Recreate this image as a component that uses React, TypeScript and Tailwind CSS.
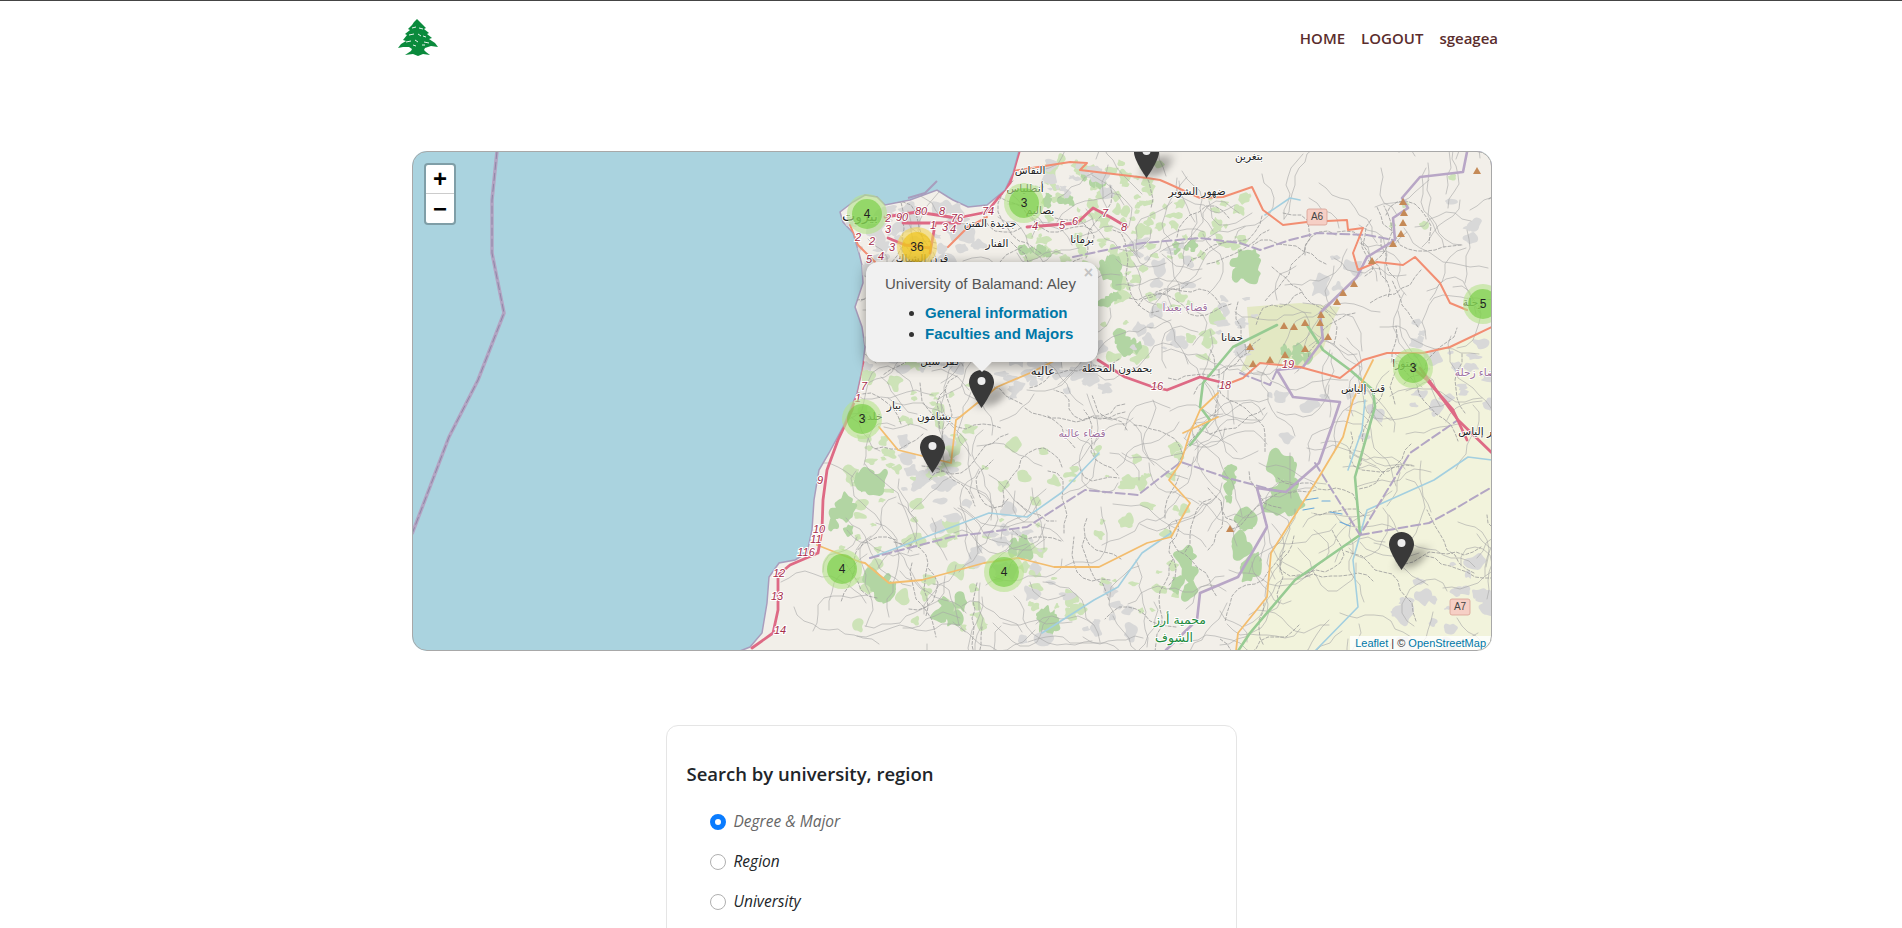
// Map page: the OSM tiles are redrawn as one svg using page coordinates (viewBox starts at the map's corner)
const MAP_X = 412;
const MAP_Y = 151;

const COAST =
  "1019,151 1013,173 1005,190 987,205 968,207 953,200 948,197 937,190 910,200 885,205 877,197 865,195 853,202 840,212 843,222 853,233 859,253 862,265 863,283 855,307 862,327 865,347 862,370 857,393 843,427 829,453 819,470 814,500 812,530 807,553 795,560 779,563 769,577 767,603 762,633 750,647 740,651 1492,651 1492,151";
const BEKAA = "1236,651 1267,597 1271,553 1319,477 1343,437 1373,360 1423,355 1492,330 1492,651";
const RESERVE = "1247,307 1300,303 1340,307 1333,320 1323,350 1303,367 1260,363 1240,373 1250,347";

const MOTORWAY = [
  "863,362 852,410 838,440 827,470 823,500 822,530 818,553 790,565 778,575 778,610 773,633 752,648",
  "885,217 917,212 957,218 987,212 1010,183 1019,152",
  "903,223 960,223",
  "935,225 930,253",
  "888,238 905,245 930,248",
  "1027,227 1053,225 1077,223 1093,208 1110,217 1127,227",
  "1098,360 1125,377 1153,387 1167,390 1200,377 1220,382",
  "1413,368 1427,380 1453,410 1467,440",
  "1420,368 1458,420 1492,453",
];
const TRUNK = [
  "1007,172 1070,162 1087,163 1080,170 1147,178 1160,180 1167,183 1200,198 1223,197 1252,187 1263,210 1283,225 1307,222 1347,220 1348,230 1363,228 1353,253 1358,270 1377,262 1403,265 1415,257 1440,283 1450,303 1467,310",
  "1225,385 1243,378 1260,363 1300,367 1340,378 1363,360 1387,353 1423,353 1450,347 1492,327",
  "948,247 967,228 987,217",
  "850,225 858,245 875,262",
];
const SECONDARY = [
  "1373,360 1353,400 1343,437 1319,477 1271,553 1267,597 1238,633 1236,651",
  "817,545 860,562 865,563 889,583 922,580 984,563 1018,558 1054,567 1099,567 1147,543 1171,537 1190,503 1169,480 1181,462 1190,433 1200,410 1218,393",
  "1183,433 1218,417",
  "879,427 898,450 951,463 956,420 960,417 997,387 1030,373 1060,358",
];
const ADMIN = [
  "1467,152 1463,172 1420,177 1402,198 1408,208 1393,218 1395,240 1367,257 1357,277 1320,313 1323,340 1303,367 1277,370 1293,397 1340,402 1333,423 1319,463 1286,492 1257,488 1267,527 1238,577 1200,593 1197,620 1166,650",
];
const ADMIN_DASHED = [
  "1073,257 1120,247 1143,243 1200,238 1240,243 1260,250 1290,240 1317,233 1367,235 1393,240",
  "870,558 951,537 1027,527 1085,490 1138,495 1161,477 1181,462 1228,478 1281,492",
  "1315,463 1360,535 1410,453 1458,420",
  "1360,535 1429,523 1458,507 1492,487",
  "1240,373 1270,385 1277,370",
];
const PROTECTED = [
  "1277,325 1233,347 1203,383 1200,407 1210,420 1190,445",
  "1307,325 1323,350 1350,370 1373,390 1375,407 1355,477 1360,535 1295,580 1250,633 1238,651",
];
const RIVERS = [
  "870,558 989,513 1027,517 1061,493 1099,453",
  "1042,633 1094,600 1118,587 1142,553 1171,533",
  "1315,651 1358,607 1353,560 1367,510 1434,480 1468,457 1492,460",
  "1348,470 1362,430 1365,400",
  "1265,215 1290,198 1300,200",
];
const WATER_DASHES = ["1305,500 1318,498", "1322,501 1330,501", "1303,510 1314,508", "1330,512 1342,514", "1340,522 1350,526"];

const PEAKS: [number, number][] = [
  [1477, 171], [1403, 202], [1404, 213], [1403, 223], [1401, 234], [1393, 244], [1372, 261], [1354, 284], [1343, 293],
  [1337, 302], [1321, 315], [1320, 323], [1305, 323], [1284, 326], [1294, 327], [1328, 337], [1250, 347], [1305, 349],
  [1285, 355], [1270, 360], [1253, 364], [1230, 529],
];

const PLACES: [string, number, number][] = [
  ["النقاش", 1030, 171], ["أنطلياس", 1025, 189], ["بصاليم", 1040, 211], ["جديدة المتن", 990, 224], ["الفنار", 997, 244],
  ["برمانا", 1082, 240], ["ضهور الشوير", 1197, 192], ["بتغرين", 1249, 157], ["حمانا", 1232, 338], ["بحمدون المحطة", 1117, 369],
  ["بشامون", 934, 417], ["يبار", 894, 406], ["فرن الشباك", 922, 259], ["كفر سيل", 940, 362], ["قب إلياس", 1363, 389],
  ["بر إلياس", 1477, 432], ["زحلة", 1473, 303], ["شتورا", 1405, 364], ["خلدة", 872, 417],
];
const DISTRICTS: [string, number, number][] = [
  ["قضاء بعبدا", 1185, 308], ["قضاء عاليه", 1082, 434], ["قضاء زحلة", 1478, 373],
];
const ROAD_NUMBERS: [string, number, number][] = [
  ["90", 902, 218], ["80", 921, 212], ["8", 942, 212], ["76", 957, 219], ["74", 988, 212], ["2", 888, 219], ["3", 888, 230],
  ["2", 858, 238], ["2", 872, 242], ["3", 892, 248], ["5", 869, 260], ["4", 881, 257], ["1", 933, 226], ["3", 945, 228],
  ["4", 953, 230], ["4", 1035, 227], ["5", 1062, 226], ["6", 1075, 222], ["7", 1105, 214], ["8", 1124, 228], ["16", 1157, 387],
  ["18", 1225, 386], ["19", 1288, 365], ["7", 864, 387], ["1", 858, 399], ["9", 820, 481], ["10", 819, 530], ["11", 816, 540],
  ["116", 806, 553], ["12", 779, 574], ["13", 777, 597], ["14", 780, 631],
];

function random(seed: number) {
  let s = seed;
  return () => {
    s = (s + 0x6d2b79f5) | 0;
    let t = Math.imul(s ^ (s >>> 15), 1 | s);
    t = (t + Math.imul(t ^ (t >>> 7), 61 | t)) ^ t;
    return ((t ^ (t >>> 14)) >>> 0) / 4294967296;
  };
}

// rounded, uneven patch: quadratic curves through the midpoints of a jittered ring
function blob(rnd: () => number, x: number, y: number, rx: number, ry: number) {
  const n = 11;
  const pts: [number, number][] = [];
  for (let i = 0; i < n; i++) {
    const a = (i / n) * Math.PI * 2;
    const k = 0.45 + rnd() * 0.95;
    pts.push([x + Math.cos(a) * rx * k, y + Math.sin(a) * ry * k]);
  }
  const mid = (a: [number, number], b: [number, number]) => `${((a[0] + b[0]) / 2).toFixed(1)} ${((a[1] + b[1]) / 2).toFixed(1)}`;
  let d = `M${mid(pts[n - 1], pts[0])}`;
  pts.forEach((p, i) => {
    d += `Q${p[0].toFixed(1)} ${p[1].toFixed(1)} ${mid(p, pts[(i + 1) % n])}`;
  });
  return d + "Z";
}

// zones: x, y, width, height, count, max radius
function scatter(seed: number, zones: number[][]) {
  const rnd = random(seed);
  let d = "";
  zones.forEach(([x, y, w, h, count, size]) => {
    for (let i = 0; i < count; i++) {
      const r = size * (0.3 + rnd() * 0.7);
      d += blob(rnd, x + rnd() * w, y + rnd() * h, r, r * (0.45 + rnd() * 0.7));
    }
  });
  return d;
}

// a large forest is several overlapping patches along its length
function forest(seed: number, areas: number[][]) {
  const rnd = random(seed);
  let d = "";
  areas.forEach(([x, y, rx, ry]) => {
    for (let i = 0; i < 8; i++) {
      const r = Math.min(rx, ry) * (0.45 + rnd() * 0.4);
      d += blob(rnd, x + (rnd() - 0.5) * rx * 1.5, y + (rnd() - 0.5) * ry * 1.5, r, r * 1.2);
    }
  });
  return d;
}

function tracks(seed: number, count: number) {
  const rnd = random(seed);
  const out: string[] = [];
  for (let i = 0; i < count; i++) {
    let x = 850 + rnd() * 640;
    let y = 155 + rnd() * 490;
    let a = rnd() * Math.PI * 2;
    let p = `${x.toFixed(0)},${y.toFixed(0)}`;
    const steps = 5 + Math.floor(rnd() * 8);
    for (let j = 0; j < steps; j++) {
      a += (rnd() - 0.5) * 1.4;
      x += Math.cos(a) * 9;
      y += Math.sin(a) * 9;
      p += ` ${x.toFixed(0)},${y.toFixed(0)}`;
    }
    out.push(p);
  }
  return out;
}

const GREEN_PALE = scatter(11, [
  [1030, 160, 130, 90, 60, 8],
  [1000, 240, 130, 60, 36, 10],
  [1120, 195, 130, 70, 44, 7],
  [1100, 260, 120, 100, 22, 9],
  [860, 360, 120, 110, 34, 9],
  [840, 460, 150, 170, 50, 10],
  [1000, 440, 130, 180, 40, 8],
  [1130, 440, 60, 180, 18, 9],
  [1330, 170, 130, 60, 4, 6],
]);
const GREEN = forest(2, [
  [1247, 263, 12, 16], [1183, 248, 24, 6], [1130, 343, 18, 10], [1248, 543, 12, 40], [1286, 483, 16, 34],
  [1183, 573, 12, 26], [1228, 487, 7, 26], [870, 483, 18, 12], [841, 517, 12, 18], [1018, 548, 12, 8],
  [879, 587, 20, 12], [1105, 300, 16, 6], [1295, 355, 18, 7], [1090, 180, 22, 6], [1060, 200, 18, 6],
  [1035, 250, 20, 6], [1110, 270, 10, 14], [950, 610, 16, 12], [1050, 620, 12, 12],
]);
const GREY = scatter(23, [
  [850, 205, 130, 70, 56, 12],
  [865, 340, 100, 30, 18, 10],
  [1000, 345, 110, 55, 34, 11],
  [900, 440, 50, 50, 16, 11],
  [1130, 240, 60, 110, 24, 9],
  [1050, 165, 60, 30, 18, 8],
  [1210, 295, 50, 60, 14, 8],
  [1300, 240, 60, 50, 4, 11],
  [1270, 390, 110, 50, 10, 10],
  [1410, 320, 82, 100, 24, 9],
  [1395, 555, 97, 95, 22, 11],
  [930, 500, 110, 70, 20, 10],
  [1020, 570, 120, 70, 14, 9],
  [1450, 180, 40, 60, 4, 9],
]);
const TRACKS = tracks(37, 300);
const PATHS = tracks(41, 110);

function Lines({ items, color, width, dash }: { items: string[]; color: string; width: number; dash?: string }) {
  return (
    <>
      {items.map((points, i) => (
        <polyline
          key={i}
          points={points}
          fill="none"
          stroke={color}
          strokeWidth={width}
          strokeDasharray={dash}
          strokeLinecap="round"
          strokeLinejoin="round"
        />
      ))}
    </>
  );
}

function MapTiles() {
  return (
    <svg viewBox={`${MAP_X} ${MAP_Y} 1080 500`} className="absolute inset-0 h-full w-full">
      <defs>
        <clipPath id="land">
          <polygon points={COAST} />
        </clipPath>
      </defs>
      <rect x={MAP_X} y={MAP_Y} width="1080" height="500" fill="#aad3df" />
      <polyline points="497,151 492,200 492,253 504,313 478,380 449,437 412,534" fill="none" stroke="#b3a4c3" strokeWidth="3.5" />
      <polyline points="497,151 492,200 492,253 504,313 478,380 449,437 412,534" fill="none" stroke="#8f88a8" strokeWidth="1" strokeDasharray="8 3" />
      <polygon points={COAST} fill="#f2efe9" stroke="#a99dbd" strokeWidth="1.5" />
      <polyline points="937,181 925,193 908,198" fill="none" stroke="#a99dbd" strokeWidth="2" />
      <g clipPath="url(#land)">
        <polygon points={BEKAA} fill="#f2f3dc" />
        <polygon points={RESERVE} fill="#e3e8c3" />
        <path d={GREEN_PALE} fill="#cde3b8" />
        <path d={GREEN} fill="#b2d5a3" />
        <path d={GREY} fill="#d8d8d8" />
        <Lines items={TRACKS} color="#a6a6a6" width={0.6} />
        <Lines items={PATHS} color="#9a9a9a" width={0.8} dash="3 2" />
        <Lines items={RIVERS} color="#a3cfe0" width={1.6} />
        <Lines items={WATER_DASHES} color="#6aa9dc" width={1.2} />
        <Lines items={PROTECTED} color="#97cb93" width={2.6} />
        <Lines items={ADMIN} color="#b8a6c6" width={2.6} />
        <Lines items={ADMIN_DASHED} color="#b3a6c4" width={2} dash="9 4" />
        <Lines items={SECONDARY} color="#f3bd6e" width={1.8} />
        <Lines items={TRUNK} color="#f28e72" width={2} />
        <Lines items={MOTORWAY} color="#de6a85" width={2.8} />
        {PEAKS.map(([x, y]) => (
          <polygon key={`${x}-${y}`} points={`${x},${y - 4} ${x + 4},${y + 3} ${x - 4},${y + 3}`} fill="#c58a57" />
        ))}
      </g>
      {ROAD_NUMBERS.map(([label, x, y]) => (
        <text key={`${label}-${x}`} x={x} y={y} textAnchor="middle" dominantBaseline="middle" stroke="#fff" strokeWidth="2" className="fill-[#a62d4c] font-['Liberation_Sans'] text-[11px] italic [paint-order:stroke]">
          {label}
        </text>
      ))}
      {PLACES.map(([label, x, y]) => (
        <text key={label} x={x} y={y} textAnchor="middle" dominantBaseline="middle" stroke="#fff" strokeWidth="1.5" className="fill-[#222] font-['DejaVu_Sans'] text-[10.5px] [paint-order:stroke]">
          {label}
        </text>
      ))}
      {DISTRICTS.map(([label, x, y]) => (
        <text key={label} x={x} y={y} textAnchor="middle" dominantBaseline="middle" stroke="#fff" strokeWidth="1.5" className="fill-[#9d6f9d] font-['DejaVu_Sans'] text-[10.5px] [paint-order:stroke]">
          {label}
        </text>
      ))}
      <text x="1043" y="371" textAnchor="middle" dominantBaseline="middle" stroke="#fff" strokeWidth="2" className="fill-[#222] font-['DejaVu_Sans'] text-[12px] [paint-order:stroke]">
        عاليه
      </text>
      <text x="860" y="217" textAnchor="middle" dominantBaseline="middle" stroke="#fff" strokeWidth="2" className="fill-[#222] font-['DejaVu_Sans'] text-[14px] [paint-order:stroke]">
        بيروت
      </text>
      <text x="1180" y="620" textAnchor="middle" dominantBaseline="middle" stroke="#fff" strokeWidth="2" className="fill-[#1c8a3c] font-['DejaVu_Sans'] text-[12.5px] [paint-order:stroke]">
        محمية أرز
      </text>
      <text x="1174" y="638" textAnchor="middle" dominantBaseline="middle" stroke="#fff" strokeWidth="2" className="fill-[#1c8a3c] font-['DejaVu_Sans'] text-[12.5px] [paint-order:stroke]">
        الشوف
      </text>
      {[
        ["A6", 1317, 217],
        ["A7", 1460, 607],
      ].map(([label, x, y]) => (
        <g key={label as string}>
          <rect x={(x as number) - 10} y={(y as number) - 8} width="20" height="16" rx="2" fill="#f6cfc5" stroke="#d99f92" strokeWidth="0.8" />
          <text x={x} y={(y as number) + 0.5} textAnchor="middle" dominantBaseline="middle" className="fill-[#444] font-['Liberation_Sans'] text-[10px]">
            {label}
          </text>
        </g>
      ))}
    </svg>
  );
}

const CLUSTERS = [
  { n: 4, x: 867, y: 214 },
  { n: 36, x: 917, y: 247 },
  { n: 3, x: 1024, y: 203 },
  { n: 3, x: 862, y: 419 },
  { n: 5, x: 1483, y: 304 },
  { n: 3, x: 1413, y: 368 },
  { n: 4, x: 842, y: 569 },
  { n: 4, x: 1004, y: 572 },
];

const PINS = [
  { x: 1146, y: 178 },
  { x: 981, y: 408 },
  { x: 932, y: 473 },
  { x: 1401, y: 570 },
];

function Cluster({ n, x, y }: { n: number; x: number; y: number }) {
  const big = n >= 10;
  return (
    <div
      className={`absolute flex h-10 w-10 items-center justify-center rounded-full ${big ? "bg-[rgba(241,211,87,0.6)]" : "bg-[rgba(181,226,140,0.6)]"}`}
      style={{ left: x - MAP_X - 20, top: y - MAP_Y - 20 }}
    >
      <div className={`flex h-[30px] w-[30px] items-center justify-center rounded-full font-['Liberation_Sans'] text-xs text-[#222] ${big ? "bg-[rgba(240,194,12,0.6)]" : "bg-[rgba(110,204,57,0.6)]"}`}>
        {n}
      </div>
    </div>
  );
}

function Pin({ x, y }: { x: number; y: number }) {
  return (
    <div className="absolute h-[38px] w-[25px]" style={{ left: x - MAP_X - 12.5, top: y - MAP_Y - 38 }}>
      <div className="absolute left-[10px] top-[16px] h-[20px] w-[26px] -skew-x-[30deg] rounded-full bg-black/30 blur-[4px]" />
      <svg viewBox="0 0 25 38" className="absolute inset-0 h-full w-full">
        <path d="M12.5 0C5.6 0 0 5.4 0 12.3 0 20.5 12.5 38 12.5 38S25 20.5 25 12.3C25 5.4 19.4 0 12.5 0Z" fill="#393939" />
        <circle cx="12.5" cy="11" r="4" fill="#eee" />
      </svg>
    </div>
  );
}

function Popup() {
  return (
    <div className="absolute left-[454px] top-[111px] h-[100px] w-[232px] font-['Liberation_Sans'] text-[15px]">
      <div className="relative h-full rounded-xl bg-[#f1f1f1] pl-[19px] pt-[12px] text-[#555] shadow-[0_3px_14px_rgba(0,0,0,0.4)]">
        <span className="absolute right-[5px] top-[3px] text-base font-bold leading-4 text-[#c3c3c3]">×</span>
        <p className="whitespace-nowrap leading-5">University of Balamand: Aley</p>
        <ul className="mt-[8px] list-disc pl-[40px] font-bold leading-[21px] text-[#333]">
          <li className="whitespace-nowrap"><a className="text-[#0078a8]">General information</a></li>
          <li className="whitespace-nowrap"><a className="text-[#0078a8]">Faculties and Majors</a></li>
        </ul>
      </div>
      <div className="absolute left-[106px] top-[100px] h-[11px] w-5 overflow-hidden">
        <div className="mx-auto -mt-[7px] h-[14px] w-[14px] rotate-45 bg-[#f1f1f1]" />
      </div>
    </div>
  );
}

function ZoomControl() {
  return (
    <div className="absolute left-3 top-3 h-[62px] w-8 rounded border-2 border-black/25 bg-white bg-clip-padding font-['Liberation_Sans'] text-[24px] font-bold text-black">
      <div className="flex h-[29px] items-center justify-center border-b border-[#ccc] leading-none">+</div>
      <div className="flex h-[29px] items-center justify-center leading-none">−</div>
    </div>
  );
}

function Cedar() {
  return (
    <svg viewBox="0 0 40 37" className="-mt-[2px] h-[37px] w-10">
      <path
        d="M19 0L23 4 25 6 28 9 26 10 31 14 29 15 34 19 31 20 37 24 40 28 33 27 27 29 26 31 28 33 32 36 25 35 20 37 15 35 7 36 13 32 14 30 11 28 5 28 0 29 3 25 8 22 5 21 9 16 7 15 12 11 10 10 14 6 16 3Z"
        fill="#0a8a3c"
      />
      <path d="M14 9l4-1M21 9l4 1M11 16l5-1M20 15l3 2M25 17l3 1M8 23l5-1M17 21l3 2M26 23l5 1M15 26l3 1M24 26l3 0" stroke="#fff" strokeWidth="0.9" fill="none" />
    </svg>
  );
}

const RADIOS = [
  { label: "Degree & Major", checked: true },
  { label: "Region", checked: false },
  { label: "University", checked: false },
];

export default function App() {
  return (
    <div className="h-screen overflow-hidden border-t border-[#444] bg-white">
      <header className="mx-auto flex h-[74px] w-[1140px] items-center justify-between pl-[17px] pr-[23px]">
        <Cedar />
        <nav className="flex items-center gap-[16px] font-['Open_Sans'] text-[15px] font-semibold text-[#5a2d2d]">
          <a>HOME</a>
          <a>LOGOUT</a>
          <a>sgeagea</a>
        </nav>
      </header>

      <div className="relative ml-[412px] mt-[76px] h-[500px] w-[1080px] overflow-hidden rounded-[15px]">
        <MapTiles />
        {CLUSTERS.map((c) => (
          <Cluster key={`${c.x}-${c.y}`} {...c} />
        ))}
        {PINS.map((p) => (
          <Pin key={p.x} {...p} />
        ))}
        <Popup />
        <ZoomControl />
        <div className="absolute bottom-0 right-0 bg-white/80 pl-[5px] pr-[6px] font-['Liberation_Sans'] text-[11px] leading-[15px] text-[#333]">
          <a className="text-[#0078a8]">Leaflet</a> | © <a className="text-[#0078a8]">OpenStreetMap</a>
        </div>
        <div className="pointer-events-none absolute inset-0 rounded-[15px] border border-[#a8a8a8]" />
      </div>

      <section className="mx-auto mt-[74px] h-[300px] w-[571px] rounded-xl border border-[#e5e5e5] px-[20px] pt-[36px] font-['Open_Sans']">
        <h2 className="text-[18.5px] font-semibold leading-6 text-[#212529]">Search by university, region</h2>
        <div className="mt-[25px] flex flex-col gap-[18px] pl-[23px]">
          {RADIOS.map((r) => (
            <label key={r.label} className="flex h-[22px] items-center gap-2 text-[15.5px] italic">
              <input
                type="radio"
                name="search"
                defaultChecked={r.checked}
                className="h-4 w-4 appearance-none rounded-full border border-[#b0b0b0] bg-white checked:border-[5px] checked:border-[#0a7cff]"
              />
              <span className={r.checked ? "text-[#666]" : "text-[#212529]"}>{r.label}</span>
            </label>
          ))}
        </div>
      </section>
    </div>
  );
}
